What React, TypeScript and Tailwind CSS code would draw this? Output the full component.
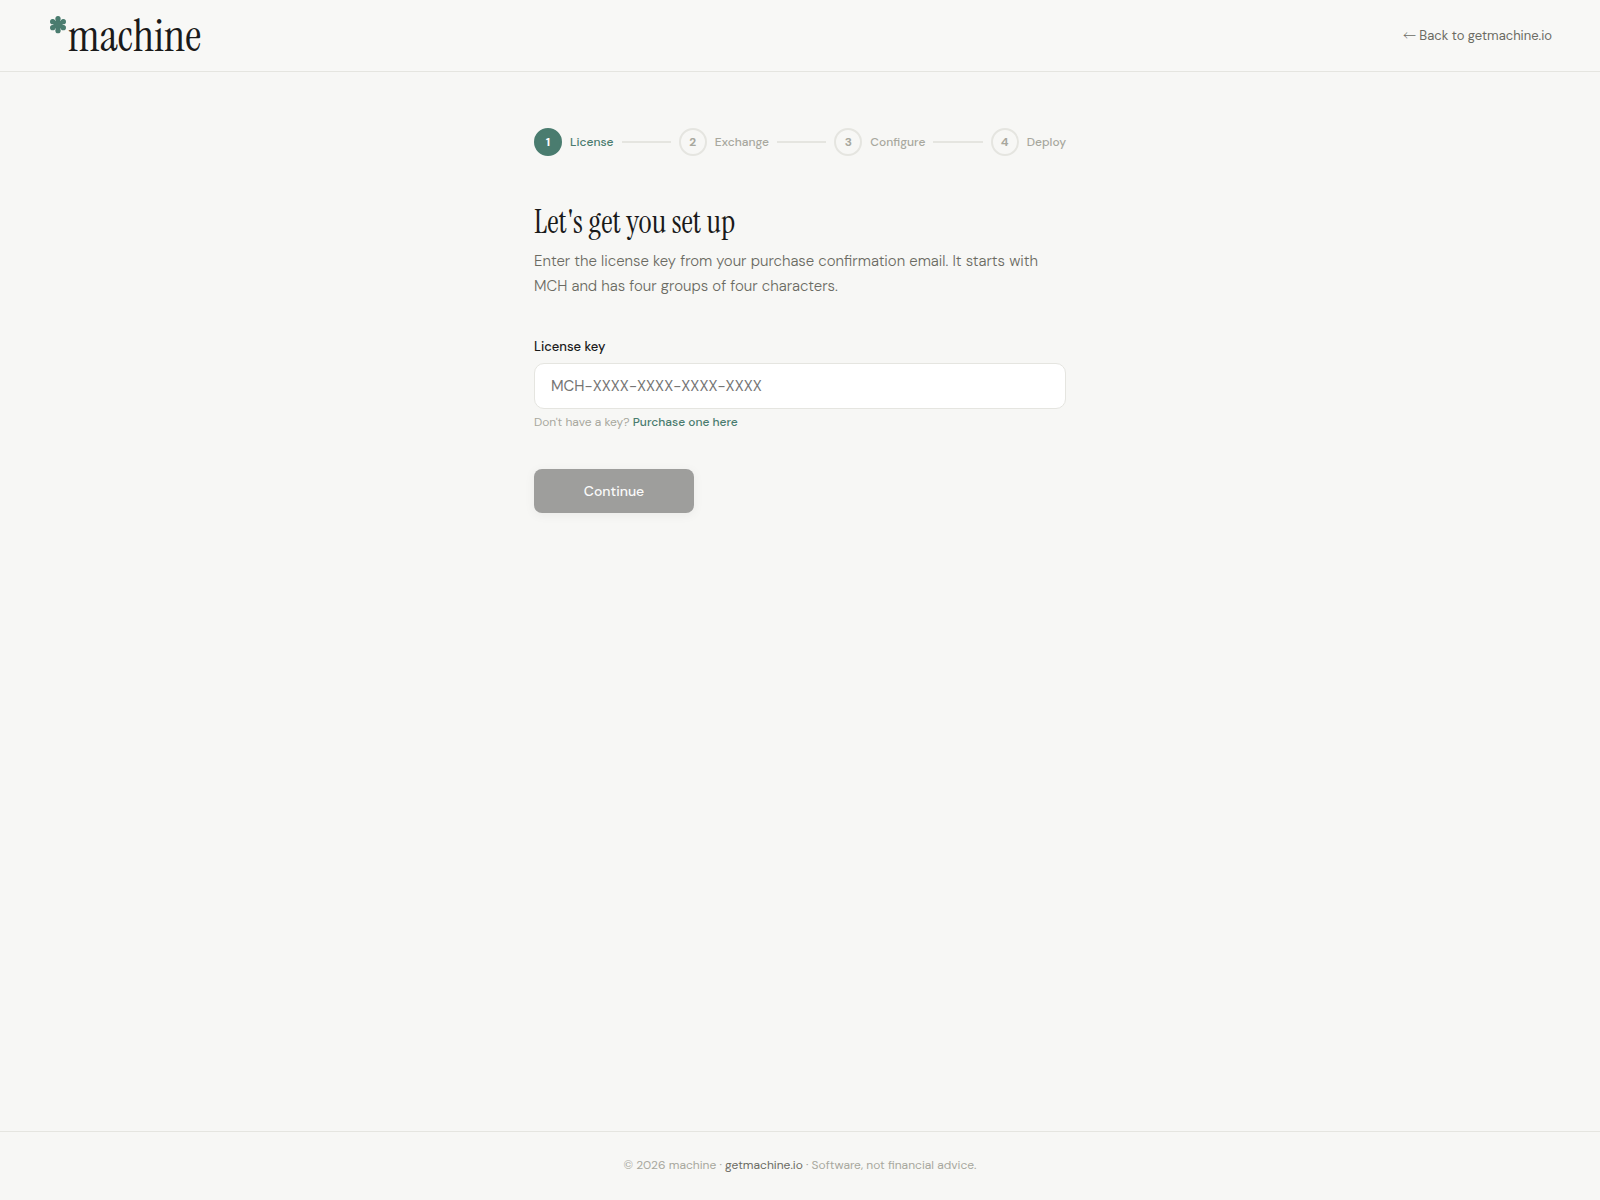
import React, { useState } from 'react';
import clsx from 'clsx';

const steps = ['License', 'Exchange', 'Configure', 'Deploy'];

const Asterisk: React.FC = () => (
  <svg className="h-[18px] w-4" viewBox="0 0 16 18" aria-hidden="true">
    <g stroke="#4a7c6f" strokeWidth="4.4" strokeLinecap="round">
      <path d="M8 2.7V14.7" />
      <path d="M2.7 5.7L13.3 11.7" />
      <path d="M13.3 5.7L2.7 11.7" />
    </g>
    <g fill="#4a7c6f">
      <circle cx="8" cy="2.7" r="2.6" />
      <circle cx="8" cy="14.7" r="2.6" />
      <circle cx="2.7" cy="5.7" r="2.6" />
      <circle cx="13.3" cy="11.7" r="2.6" />
      <circle cx="13.3" cy="5.7" r="2.6" />
      <circle cx="2.7" cy="11.7" r="2.6" />
    </g>
  </svg>
);

const Stepper: React.FC<{ current: number }> = ({ current }) => (
  <ol className="mb-12 flex items-center gap-2">
    {steps.map((label, i) => (
      <React.Fragment key={label}>
        {i > 0 && <li className="h-[2px] flex-1 bg-[#e5e5e0]" aria-hidden="true" />}
        <li className="flex items-center gap-2">
          <span
            className={clsx(
              'flex size-7 items-center justify-center rounded-full border-2 text-xs font-bold',
              i === current
                ? 'border-[#4a7c6f] bg-[#4a7c6f] text-white'
                : 'border-[#e5e5e0] text-[#a8a89e]'
            )}
          >
            {i + 1}
          </span>
          <span
            className={clsx(
              'text-xs font-medium',
              i === current ? 'text-[#4a7c6f]' : 'text-[#a8a89e]'
            )}
          >
            {label}
          </span>
        </li>
      </React.Fragment>
    ))}
  </ol>
);

const App: React.FC = () => {
  const [licenseKey, setLicenseKey] = useState('');

  return (
    <div className="flex min-h-screen flex-col bg-[#f7f7f5] font-['DM_Sans','Inter',sans-serif] text-[#1a1a1a]">
      <header className="flex h-18 items-center justify-between border-b border-[#e5e5e0] bg-[#f8f8f6] px-12">
        <a href="/" className="flex items-start gap-[2px] pl-[2px]">
          <Asterisk />
          <span className="font-['Instrument_Serif','Liberation_Serif',serif] text-[45px] leading-10">
            machine
          </span>
        </a>
        <a href="https://getmachine.io" className="text-[13px] leading-5 text-[#6b6b63]">
          <span className="font-['Noto_Sans_CJK_JP',sans-serif] leading-none font-light">←</span> Back to
          getmachine.io
        </a>
      </header>

      <main className="mx-auto w-full max-w-[580px] flex-1 px-6 pt-14">
        <Stepper current={0} />

        <h1 className="mb-2 font-['Instrument_Serif','Liberation_Serif',serif] text-[32px] leading-[37px]">
          Let's get you set up
        </h1>
        <p className="mb-9 text-[15px] leading-[25px] font-light text-[#6b6b63]">
          Enter the license key from your purchase confirmation email. It starts with MCH and has four
          groups of four characters.
        </p>

        <form onSubmit={(e) => e.preventDefault()}>
          <label htmlFor="license-key" className="mb-1.5 block pt-[2px] text-[13px] leading-5 font-medium">
            License key
          </label>
          <input
            id="license-key"
            type="text"
            value={licenseKey}
            onChange={(e) => setLicenseKey(e.target.value)}
            placeholder="MCH-XXXX-XXXX-XXXX-XXXX"
            className="h-[46px] w-full rounded-[10px] border border-[#e5e5e0] bg-white px-4 text-[15px] placeholder:text-[#757575]"
          />
          <p className="mt-1 text-xs leading-[18px] text-[#a8a89e]">
            Don't have a key?{' '}
            <a href="https://getmachine.io" className="font-medium text-[#4a7c6f]">
              Purchase one here
            </a>
          </p>
          <button
            type="submit"
            disabled={!licenseKey}
            className="mt-[38px] h-11 w-40 rounded-lg bg-[#1a1a1a] text-sm font-medium text-white shadow-[0_2px_8px_rgba(0,0,0,0.12)] disabled:opacity-40"
          >
            Continue
          </button>
        </form>
      </main>

      <footer className="border-t border-[#e5e5e0] px-12 pt-6 pb-[26px] text-center text-xs leading-[18px] text-[#a8a89e]">
        © 2026 machine ·{' '}
        <a href="https://getmachine.io" className="text-[#6b6b63]">
          getmachine.io
        </a>{' '}
        · Software, not financial advice.
      </footer>
    </div>
  );
};

export default App;
